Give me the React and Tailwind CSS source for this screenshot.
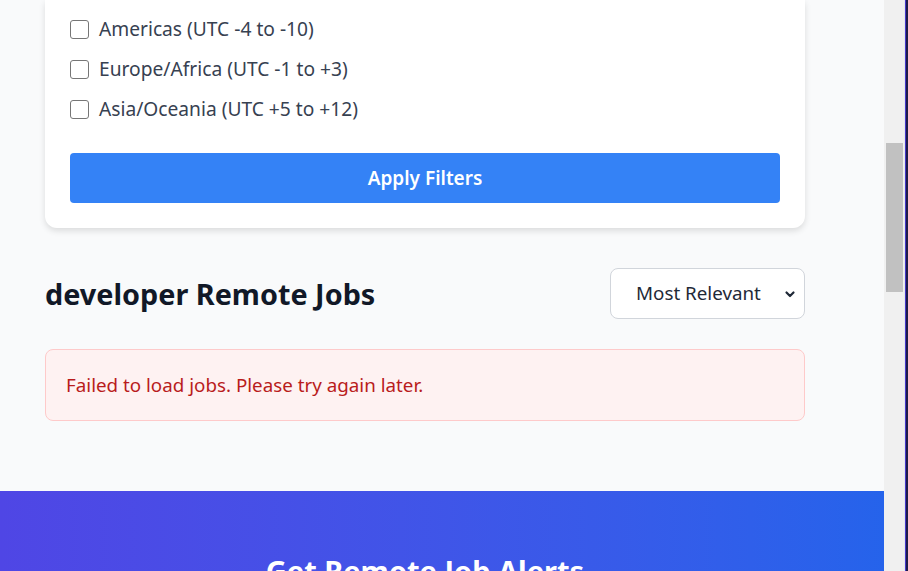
import React from 'react';

const regions = [
  'Americas (UTC -4 to -10)',
  'Europe/Africa (UTC -1 to +3)',
  'Asia/Oceania (UTC +5 to +12)',
];

const Checkbox = ({ label }) => (
  <label className="flex items-center gap-[10px] h-[40px] text-[19.2px] text-[#374151]">
    <span className="w-[19px] h-[19px] rounded-[3px] border border-[#767676] bg-white" />
    <span>{label}</span>
  </label>
);

const App = () => {
  return (
    <div className="flex w-[908px] h-[571px] overflow-hidden font-['Noto_Sans',sans-serif]">
      <main className="w-[884px] bg-[#f9fafb] flex flex-col">
        <div className="w-[760px] ml-[45px]">
          <div className="bg-white rounded-b-xl shadow-[0_3px_6px_rgba(0,0,0,0.12)] px-[25px] pt-[9px] pb-[25px]">
            {regions.map((r) => (
              <Checkbox key={r} label={r} />
            ))}
            <button className="mt-[24px] w-full h-[50px] rounded-[4px] bg-[#3482f6] text-white font-semibold text-[19px]">
              Apply Filters
            </button>
          </div>

          <div className="flex items-center justify-between mt-[40px] h-[51px]">
            <h2 className="text-[28.8px] font-bold text-[#111827]">developer Remote Jobs</h2>
            <div className="relative w-[195px] h-[51px] bg-white border border-[#d1d5db] rounded-lg flex items-center pl-[25px] text-[18.8px] text-[#1f2937]">
              Most Relevant
              <svg className="absolute right-[8px] top-[19px]" width="12" height="12" viewBox="0 0 12 12" fill="none" stroke="#1f2937" strokeWidth="2.2" strokeLinecap="round" strokeLinejoin="round">
                <path d="M2.5 4.5 6 8l3.5-3.5" />
              </svg>
            </div>
          </div>

          <div className="mt-[30px] h-[72px] bg-[#fef2f2] border border-[#fecaca] rounded-lg flex items-center px-[20px] text-[18.8px] text-[#b91c1c]">
            Failed to load jobs. Please try again later.
          </div>
        </div>

        <section className="mt-[70px] flex-1 bg-linear-to-r from-[#4f46e5] to-[#2563eb]">
          <div className="w-[760px] ml-[45px] pt-[62px] text-center">
            <h2 className="text-[29px] font-bold text-white leading-tight">Get Remote Job Alerts</h2>
          </div>
        </section>
      </main>

      <div className="w-[20px] bg-[#f0f0f0] pt-[143px] pl-[2px] pr-[1px]">
        <div className="h-[149px] bg-[#c1c1c1]" />
      </div>
      <div className="w-[1px] bg-[#e5e7eb]" />
      <div className="w-[1px] bg-[#4338ca]" />
      <div className="w-[2px] bg-[#1e1b4b]" />
    </div>
  );
};

export default App;
